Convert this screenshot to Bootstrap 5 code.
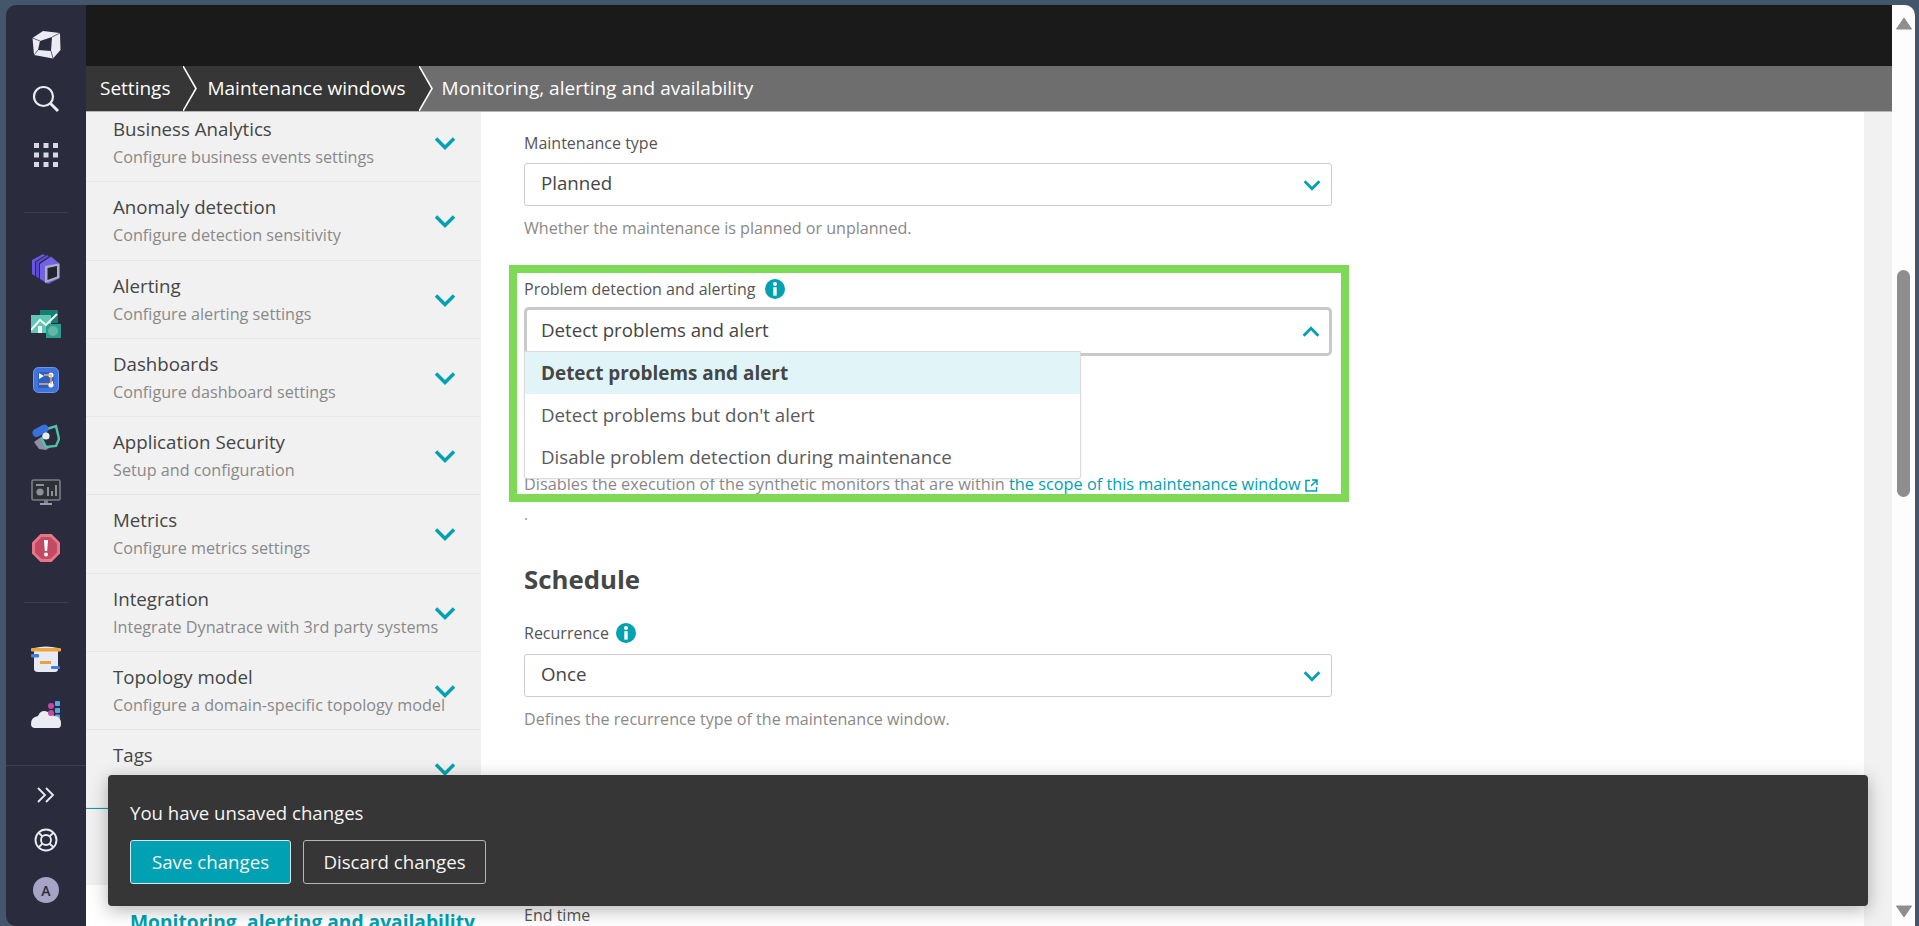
<!DOCTYPE html>
<html lang="en">
<head>
  <meta charset="UTF-8" />
  <meta name="viewport" content="width=device-width, initial-scale=1" />
  <title>Maintenance windows</title>
  <link href="https://cdn.jsdelivr.net/npm/bootstrap@5.3.0/dist/css/bootstrap.min.css" rel="stylesheet" />
  <style>
    html, body { height: 100%; }
    body {
      background: #44566c;
      font-family: "Open Sans", "Noto Sans", sans-serif;
      color: #454646;
      overflow: hidden;
    }
    .shell { height: 926px; padding: 5px 4px 0 6px; position: relative; }

    /* left rail */
    .rail { width: 80px; background: #2a2b3d; border-radius: 10px 0 0 10px; flex: none; padding-top: 10px; }
    .rail-slot { height: 56px; }
    .rail-line { width: 44px; height: 1px; background: #3d3e52; margin: 29px auto 27px; }
    .rail-line.second { margin: 26px auto 28px; }
    .rail-foot { margin-top: auto; border-top: 1px solid #3d3e52; padding: 6px 0 13px; }
    .rail-foot .rail-slot { height: 45px; }
    .rail-foot .rail-slot:last-child { height: 46px; margin-top: 5px; }
    .avatar-dot { width: 26px; height: 26px; border-radius: 50%; background: #a5a4c4; color: #2a2b3d; font-size: 14px; font-weight: 600; }

    /* top */
    .blackbar { height: 61px; background: #1a1a1a; flex: none; }
    .crumbs { height: 46px; background: #6e6e6e; color: #fff; font-size: 19px; border-bottom: 1px solid #b5b5b5; }
    .crumb { background: #363636; height: 45px; }
    .crumb-first { padding-left: 14px; padding-right: 13px; }
    .crumb-second { padding-left: 10px; padding-right: 13px; }
    .crumb-last { padding-left: 9px; }
    .crumb-sep { width: 14px; height: 45px; flex: none; display: block; }

    /* settings list */
    .side-col { width: 395px; flex: none; }
    .side-items { margin-top: -8px; background: #f1f1f1; border-radius: 0; }
    .side-items .list-group-item {
      height: 78.25px; background: #f1f1f1; border: 0; border-bottom: 1px solid #e6e6e6;
      padding: 12px 0 0 27px; white-space: nowrap; border-radius: 0;
    }
    .side-title { font-size: 18.7px; line-height: 25px; color: #454646; }
    .side-sub { font-size: 16.2px; line-height: 20px; margin-top: 6px; color: #898989; }
    .side-chev { width: 22px; height: 14px; right: 25px; top: 32px; }
    .side-rest { height: 77px; background: #f1f1f1; border-top: 1px solid #00a1b2; }
    .side-active { font-size: 19.2px; font-weight: 700; color: #00a1b2; padding: 23px 0 0 44px; white-space: nowrap; }

    /* form */
    .form-col { padding: 21px 0 0 43px; }
    .form-wrap { width: 808px; }
    .field-label { font-size: 16px; line-height: 20px; color: #555; margin-bottom: 10px; }
    .field-box {
      height: 43px; border: 1px solid #ccc; border-radius: 3px; font-size: 18.7px; color: #454646;
      padding: 0 10px 0 16px; background: #fff;
    }
    .field-box span { margin-top: -2px; }
    .field-chev { width: 18px; height: 12px; }
    .field-help { font-size: 16.1px; line-height: 20px; color: #898989; margin-top: 12px; white-space: nowrap; }
    .info-dot { width: 20px; height: 20px; margin-left: 7px; margin-top: -1px; }
    .green-frame { border: 8px solid #7ed957; margin: 27px -17px 0 -15px; padding: 6px 9px 0 7px; height: 237px; position: relative; }
    .green-frame .field-label { margin-bottom: 8px; }
    .green-frame .info-dot { margin-left: 10px; }
    .field-open { height: 49px; border: 3px solid #c9c9c9; border-radius: 5px; padding-left: 14px; padding-right: 9px; }
    .green-frame .field-help { margin-top: 118px; font-size: 16.3px; }
    .green-frame a { color: #00a1b2; text-decoration: none; }
    .ext-icon { width: 13px; height: 13px; margin-left: 4px; }
    .open-menu {
      display: block; position: absolute; left: 7px; top: 78px; width: 557px; padding: 0; margin: 0;
      border: 1px solid #dcdcdc; border-radius: 0 0 3px 3px; font-size: 18.7px; box-shadow: 0 1px 3px rgba(0,0,0,.08);
    }
    .open-menu .dropdown-item { height: 42px; padding: 0 0 0 16px; display: flex; align-items: center; color: #5a5a5a; }
    .open-menu .dropdown-item.picked { background: #e1f5f9; color: #454646; font-weight: 700; font-size: 18.9px; }
    .lone-dot { font-size: 15px; line-height: 20px; color: #898989; margin-top: 2px; }
    .block-head { font-size: 25.8px; font-weight: 700; line-height: 34px; color: #454646; margin: 38px 0 27px; }
    .block-head + .field-label { margin-bottom: 11px; }
    .end-label { margin-top: 176px; }
    .gutter { width: 28px; background: #f1f1f1; flex: none; }

    /* scrollbar */
    .scroll-rail { width: 23px; flex: none; background: #fdfdfd; border-radius: 0 10px 0 0; padding: 12px 3px 8px 4px; }
    .scroll-up, .scroll-down { width: 16px; height: 13px; display: block; }
    .scroll-thumb { width: 13px; height: 227px; background: #8e8e8e; border-radius: 7px; margin: 240px 0 408px 1px; }

    /* unsaved bar */
    .save-bar {
      position: absolute; left: 108px; top: 775px; width: 1760px; height: 131px; background: #363636;
      border-radius: 4px; box-shadow: 0 4px 18px rgba(0,0,0,.3); padding: 25px 22px; color: #f4f4f4;
    }
    .save-msg { font-size: 18.6px; line-height: 26px; margin-bottom: 14px; }
    .save-bar .btn { height: 44px; font-size: 18.7px; border-radius: 3px; padding: 0; color: #f4f4f4; line-height: 1; }
    .btn-keep { width: 161px; background: #00a1b2; border: 1px solid #cfe9ee; }
    .btn-drop { width: 183px; background: transparent; border: 1px solid #b5b5b5; }
  </style>
</head>
<body>
<svg width="0" height="0" class="position-absolute">
  <symbol id="chevDown" viewBox="0 0 22 14"><path d="M2 2.5 11 11.5 20 2.5" fill="none" stroke="#00a1b2" stroke-width="3.4"/></symbol>
  <symbol id="chevUp" viewBox="0 0 22 14"><path d="M2 11.5 11 2.5 20 11.5" fill="none" stroke="#00a1b2" stroke-width="3.4"/></symbol>
  <symbol id="infoDot" viewBox="0 0 20 20"><circle cx="10" cy="10" r="10" fill="#00a1b2"/><circle cx="10" cy="5" r="2" fill="#fff"/><rect x="8.3" y="8.2" width="3.4" height="8.4" fill="#fff"/></symbol>
</svg>

<div class="shell d-flex">
  <!-- rail -->
  <div class="rail d-flex flex-column">
    <div class="rail-slot d-flex align-items-center justify-content-center">
      <svg width="29" height="28" viewBox="0 0 29 28" class="mt-1"><path d="M0.500 7 11 0 28 2 28.500 19 21 27.500 2 24Z" fill="#ecebf3"/><path d="M8 10 20 6 19 20 6 19Z" fill="#2a2b3d"/><path d="M0.500 7 8 10M20 6 28 2M19 20 21 27.500M6 19 2 24" stroke="#2a2b3d" stroke-width=".7"/></svg>
    </div>
    <div class="rail-slot d-flex align-items-center justify-content-center">
      <svg width="28" height="28" viewBox="0 0 28 28"><circle cx="11.5" cy="11.5" r="9.5" fill="none" stroke="#ecebf3" stroke-width="2.2"/><path d="M18.5 18.5 26 26" stroke="#ecebf3" stroke-width="3"/></svg>
    </div>
    <div class="rail-slot d-flex align-items-center justify-content-center">
      <svg width="24" height="24" viewBox="0 0 24 24" fill="#d9d8e4"><rect width="5" height="5"/><rect x="9.5" width="5" height="5"/><rect x="19" width="5" height="5"/><rect y="9.5" width="5" height="5"/><rect x="9.5" y="9.5" width="5" height="5"/><rect x="19" y="9.5" width="5" height="5"/><rect y="19" width="5" height="5"/><rect x="9.5" y="19" width="5" height="5"/><rect x="19" y="19" width="5" height="5"/></svg>
    </div>
    <div class="rail-line"></div>
    <div class="rail-slot d-flex align-items-center justify-content-center">
      <svg width="28" height="31" viewBox="0 0 28 31"><path d="M0 7 11 1 13 2.500 3 8.500V23L0 21Z" fill="#6a55e0"/><path d="M4 9 15 2 17 3.500 7 10V25.500L4 23.500Z" fill="#5b48cf"/><path d="M8 11 19 3.500 28 11V25L16 31 8 26Z" fill="#7462e6"/><path d="M13 13 27 10.500V25L13 30Z" fill="#aab0c6"/><path d="M15.500 15 25 13V23.500L15.500 27Z" fill="#23242f"/></svg>
    </div>
    <div class="rail-slot d-flex align-items-center justify-content-center">
      <svg width="30" height="28" viewBox="0 0 30 28"><rect x="9" y="0" width="18" height="13" fill="#157d72"/><rect x="0" y="5" width="20" height="18" fill="#62c6b4"/><rect x="15" y="14" width="15" height="14" fill="#2f9d8d"/><circle cx="22" cy="21" r="5" fill="#62b7a4"/><path d="M0 20 9 10 15 15 26 4" fill="none" stroke="#f3f8f7" stroke-width="2"/><rect x="7" y="16" width="4" height="7" fill="#eaf5f3"/></svg>
    </div>
    <div class="rail-slot d-flex align-items-center justify-content-center">
      <svg width="26" height="26" viewBox="0 0 26 26"><rect x=".5" y=".5" width="25" height="25" rx="5" fill="#3f73dd" stroke="#6d97ea"/><rect x="5" y="5" width="16" height="16" rx="1" fill="#2f5fc4"/><path d="M6 6 11 9 6 12ZM20 14 15 17 20 20Z" fill="#fff"/><circle cx="18" cy="8" r="2.600" fill="#fff"/><circle cx="18" cy="18" r="2.600" fill="#fff"/><path d="M11 8H18V17M6 17H15" fill="none" stroke="#f0b25c" stroke-width="1.400"/></svg>
    </div>
    <div class="rail-slot d-flex align-items-center justify-content-center">
      <svg width="28" height="30" viewBox="0 0 28 30"><path d="M2 21 9 16 20 25 14 29 7 28Z" fill="#8d8fa6"/><path d="M15 8 24 5 27 18 24 25 14 26 10 18Z" fill="#2a2b3d" stroke="#52c2a7" stroke-width="2.400"/><rect x="0" y="6" width="17" height="8" rx="4" transform="rotate(-28 8 10)" fill="#3a70dd"/><circle cx="14" cy="15" r="3.600" fill="#e8ecee"/></svg>
    </div>
    <div class="rail-slot d-flex align-items-center justify-content-center">
      <svg width="30" height="27" viewBox="0 0 30 27"><rect x="1" y="1" width="28" height="20" rx="1.500" fill="#2f3036" stroke="#7b7e86" stroke-width="1.600"/><circle cx="9" cy="13" r="3.600" fill="#8e9097"/><rect x="5" y="5" width="8" height="2" fill="#8e9097"/><rect x="16" y="8" width="2" height="9" fill="#8e9097"/><rect x="20" y="12" width="2" height="5" fill="#8e9097"/><rect x="24" y="6" width="2" height="11" fill="#8e9097"/><rect x="13" y="21" width="4" height="3" fill="#7b7e86"/><rect x="9" y="24" width="12" height="2" fill="#9a9ca3"/></svg>
    </div>
    <div class="rail-slot d-flex align-items-center justify-content-center">
      <svg width="28" height="28" viewBox="0 0 28 28"><path d="M8.500 0H19.500L28 8.500V19.500L19.500 28H8.500L0 19.500V8.500Z" fill="#e8758a"/><path d="M9.500 3H18.500L25 9.500V18.500L18.500 25H9.500L3 18.500V9.500Z" fill="#c24b63"/><path d="M12 6H16L15.200 17H12.800Z" fill="#fff"/><circle cx="14" cy="20.500" r="2" fill="#fff"/></svg>
    </div>
    <div class="rail-line second"></div>
    <div class="rail-slot d-flex align-items-center justify-content-center">
      <svg width="30" height="28" viewBox="0 0 30 28"><path d="M3 3Q15 0 27 3V24Q27 27 24 27H7Q3 27 3 24Z" fill="#e7e9f3"/><rect x="0" y="3" width="30" height="3.400" rx="1" fill="#eba73f"/><rect x="9" y="16" width="11" height="3" fill="#e6a24a"/><rect x="0" y="9" width="8" height="3.500" rx="1" fill="#3f7fe6"/><rect x="20" y="21" width="9" height="3" rx="1" fill="#3f7fe6"/></svg>
    </div>
    <div class="rail-slot d-flex align-items-center justify-content-center">
      <svg width="30" height="28" viewBox="0 0 30 28"><rect x="24" y="0" width="5" height="5" rx="1" fill="#5fa4e8"/><rect x="24" y="7" width="5" height="5" rx="1" fill="#5fa4e8"/><rect x="24" y="13.500" width="5" height="5" rx="1" fill="#5fa4e8"/><path d="M0 23Q0 16 7 15 10 8 17 11 21 11 23 15 30 15 30 23 30 27 27 27H4Q0 27 0 23Z" fill="#ebecf3"/><circle cx="20" cy="5" r="3" fill="#c24aa0"/><circle cx="20" cy="12" r="3" fill="#c24aa0"/></svg>
    </div>
    <div class="rail-foot">
      <div class="rail-slot d-flex align-items-center justify-content-center">
        <svg width="18" height="16" viewBox="0 0 18 16"><path d="M1 1 8 8 1 15M9 1 16 8 9 15" fill="none" stroke="#ecebf3" stroke-width="1.800"/></svg>
      </div>
      <div class="rail-slot d-flex align-items-center justify-content-center">
        <svg width="24" height="24" viewBox="0 0 24 24" fill="none" stroke="#ecebf3" stroke-width="1.900"><circle cx="12" cy="12" r="10.500"/><circle cx="12" cy="12" r="5"/><path d="M4.800 4.800 8.500 8.500M19.200 4.800 15.500 8.500M4.800 19.200 8.500 15.500M19.200 19.200 15.500 15.500"/></svg>
      </div>
      <div class="rail-slot d-flex align-items-center justify-content-center">
        <div class="avatar-dot d-flex align-items-center justify-content-center">A</div>
      </div>
    </div>
  </div>

  <!-- page -->
  <div class="flex-grow-1 d-flex flex-column overflow-hidden">
    <div class="blackbar"></div>
    <div class="crumbs d-flex flex-shrink-0">
      <div class="crumb crumb-first d-flex align-items-center">Settings</div>
      <svg class="crumb-sep" viewBox="0 0 14 45"><rect width="14" height="45" fill="#363636"/><path d="M0 0 13 22.500 0 45" fill="none" stroke="#fff" stroke-width="1.600"/></svg>
      <div class="crumb crumb-second d-flex align-items-center">Maintenance windows</div>
      <svg class="crumb-sep" viewBox="0 0 14 45"><rect width="14" height="45" fill="#6e6e6e"/><path d="M0 0 13 22.500 0 45Z" fill="#363636"/><path d="M0 0 13 22.500 0 45" fill="none" stroke="#fff" stroke-width="1.600"/></svg>
      <div class="crumb-last d-flex align-items-center">Monitoring, alerting and availability</div>
    </div>

    <div class="flex-grow-1 d-flex overflow-hidden bg-white">
      <div class="side-col">
        <div class="list-group side-items">
          <div class="list-group-item position-relative"><div class="side-title">Business Analytics</div><div class="side-sub">Configure business events settings</div><svg class="side-chev position-absolute"><use href="#chevDown"/></svg></div>
          <div class="list-group-item position-relative"><div class="side-title">Anomaly detection</div><div class="side-sub">Configure detection sensitivity</div><svg class="side-chev position-absolute"><use href="#chevDown"/></svg></div>
          <div class="list-group-item position-relative"><div class="side-title">Alerting</div><div class="side-sub">Configure alerting settings</div><svg class="side-chev position-absolute"><use href="#chevDown"/></svg></div>
          <div class="list-group-item position-relative"><div class="side-title">Dashboards</div><div class="side-sub">Configure dashboard settings</div><svg class="side-chev position-absolute"><use href="#chevDown"/></svg></div>
          <div class="list-group-item position-relative"><div class="side-title">Application Security</div><div class="side-sub">Setup and configuration</div><svg class="side-chev position-absolute"><use href="#chevDown"/></svg></div>
          <div class="list-group-item position-relative"><div class="side-title">Metrics</div><div class="side-sub">Configure metrics settings</div><svg class="side-chev position-absolute"><use href="#chevDown"/></svg></div>
          <div class="list-group-item position-relative"><div class="side-title">Integration</div><div class="side-sub">Integrate Dynatrace with 3rd party systems</div><svg class="side-chev position-absolute"><use href="#chevDown"/></svg></div>
          <div class="list-group-item position-relative"><div class="side-title">Topology model</div><div class="side-sub">Configure a domain-specific topology model</div><svg class="side-chev position-absolute"><use href="#chevDown"/></svg></div>
          <div class="list-group-item position-relative"><div class="side-title">Tags</div><svg class="side-chev position-absolute"><use href="#chevDown"/></svg></div>
        </div>
        <div class="side-rest"></div>
        <div class="side-active">Monitoring, alerting and availability</div>
      </div>

      <div class="form-col flex-grow-1">
        <div class="form-wrap">
          <div class="field-label">Maintenance type</div>
          <div class="field-box d-flex align-items-center justify-content-between"><span>Planned</span><svg class="field-chev"><use href="#chevDown"/></svg></div>
          <div class="field-help">Whether the maintenance is planned or unplanned.</div>

          <div class="green-frame">
            <div class="field-label d-flex align-items-center">Problem detection and alerting<svg class="info-dot"><use href="#infoDot"/></svg></div>
            <div class="field-box field-open d-flex align-items-center justify-content-between"><span>Detect problems and alert</span><svg class="field-chev"><use href="#chevUp"/></svg></div>
            <div class="dropdown-menu open-menu">
              <a class="dropdown-item picked" href="#">Detect problems and alert</a>
              <a class="dropdown-item" href="#">Detect problems but don't alert</a>
              <a class="dropdown-item" href="#">Disable problem detection during maintenance</a>
            </div>
            <div class="field-help">Disables the execution of the synthetic monitors that are within <a href="#">the scope of this maintenance window<svg class="ext-icon" viewBox="0 0 13 13" fill="none" stroke="#00a1b2" stroke-width="1.500"><path d="M5 1.500H1V12H11.500V8M7 1H12V6M12 1 6 7"/></svg></a></div>
          </div>
          <div class="lone-dot">.</div>

          <div class="block-head">Schedule</div>
          <div class="field-label d-flex align-items-center">Recurrence<svg class="info-dot"><use href="#infoDot"/></svg></div>
          <div class="field-box d-flex align-items-center justify-content-between"><span>Once</span><svg class="field-chev"><use href="#chevDown"/></svg></div>
          <div class="field-help">Defines the recurrence type of the maintenance window.</div>
          <div class="field-label end-label">End time</div>
        </div>
      </div>
      <div class="gutter"></div>
    </div>
  </div>

  <!-- scrollbar -->
  <div class="scroll-rail">
    <svg class="scroll-up" viewBox="0 0 16 13"><path d="M8 1 15.500 12H.5Z" fill="#8e8e8e" stroke="#8e8e8e" stroke-linejoin="round"/></svg>
    <div class="scroll-thumb"></div>
    <svg class="scroll-down" viewBox="0 0 16 13"><path d="M8 12 15.500 1H.5Z" fill="#8e8e8e" stroke="#8e8e8e" stroke-linejoin="round"/></svg>
  </div>

  <!-- unsaved changes bar -->
  <div class="save-bar">
    <div class="save-msg">You have unsaved changes</div>
    <div class="d-flex gap-2">
      <button class="btn btn-keep" type="button">Save changes</button>
      <button class="btn btn-drop ms-1" type="button">Discard changes</button>
    </div>
  </div>
</div>

<script src="https://cdn.jsdelivr.net/npm/bootstrap@5.3.0/dist/js/bootstrap.bundle.min.js"></script>
</body>
</html>
